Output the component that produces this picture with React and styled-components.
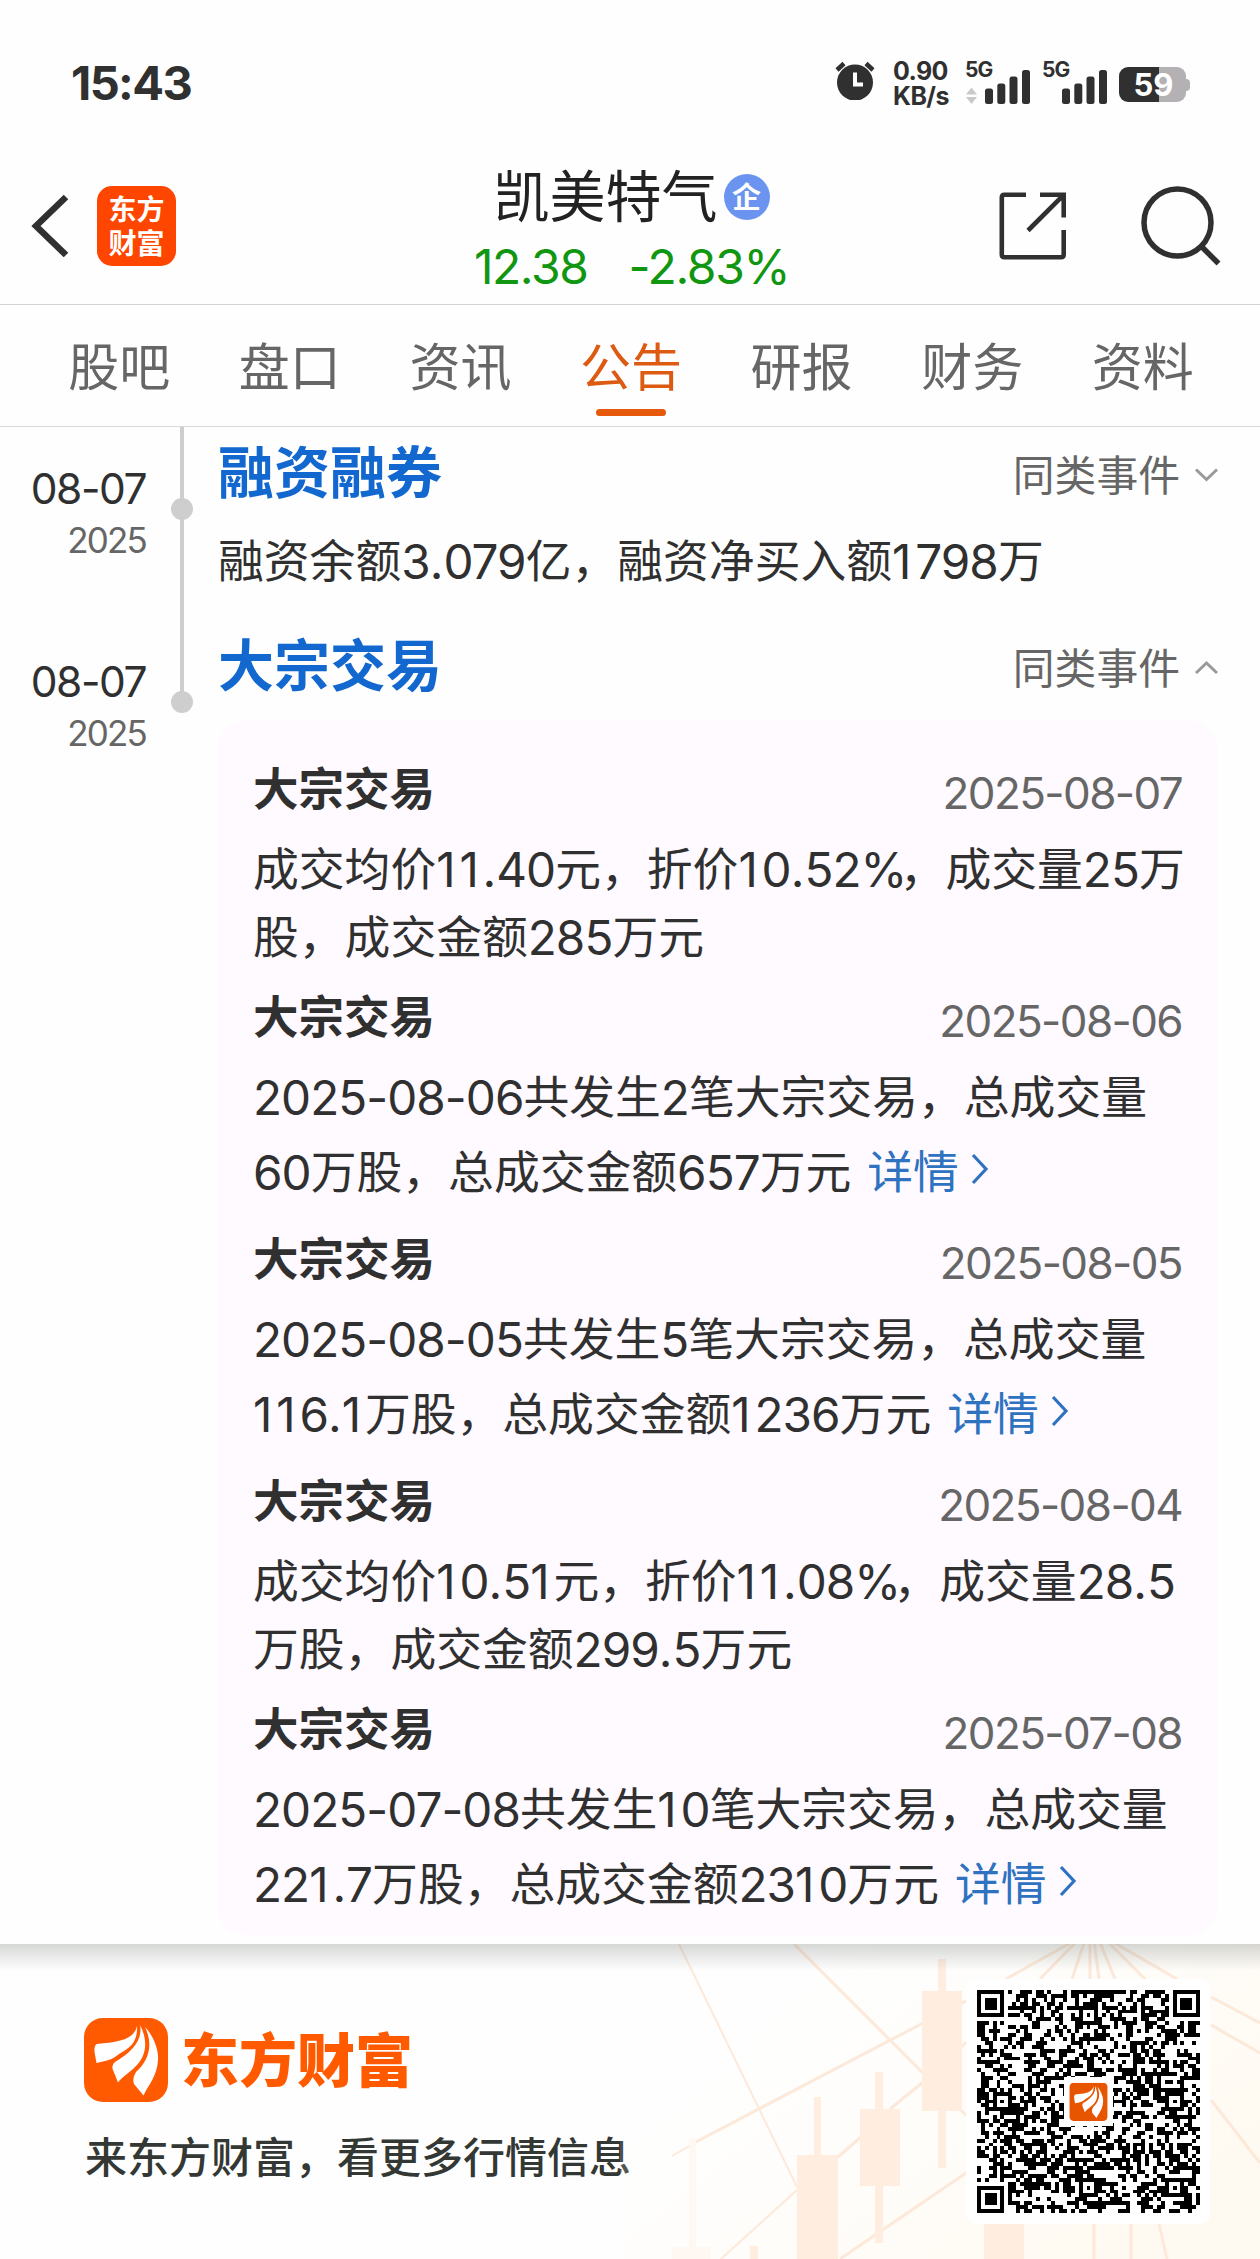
import React from "react";
import styled, { createGlobalStyle } from "styled-components";

const tabs = ["股吧", "盘口", "资讯", "公告", "研报", "财务", "资料"];

const trades = [
  {
    date: "2025-08-07",
    lines: ["成交均价11.40元，折价10.52%，成交量25万", "股，成交金额285万元"],
  },
  {
    date: "2025-08-06",
    lines: ["2025-08-06共发生2笔大宗交易，总成交量", "60万股，总成交金额657万元"],
    more: true,
  },
  {
    date: "2025-08-05",
    lines: [
      "2025-08-05共发生5笔大宗交易，总成交量",
      "116.1万股，总成交金额1236万元",
    ],
    more: true,
  },
  {
    date: "2025-08-04",
    lines: ["成交均价10.51元，折价11.08%，成交量28.5", "万股，成交金额299.5万元"],
  },
  {
    date: "2025-07-08",
    lines: [
      "2025-07-08共发生10笔大宗交易，总成交量",
      "221.7万股，总成交金额2310万元",
    ],
    more: true,
  },
];

const spacing = { 1: "0.08em", ".": "0", "%": "-0.16em" };

// digits are set a little larger than the Chinese text around them,
// "1", "." and "%" need their own tracking
const Mixed = ({ text }) =>
  text
    .split(/([0-9.%-]+)/)
    .filter(Boolean)
    .map((part, i) =>
      /[0-9]/.test(part) ? (
        <Num key={i}>
          {part
            .split(/([1.%])/)
            .filter(Boolean)
            .map((s, j) =>
              spacing[s] ? (
                <Tracked key={j} $space={spacing[s]}>
                  {s}
                </Tracked>
              ) : (
                s
              )
            )}
        </Num>
      ) : (
        part
      )
    );

const QR_SIZE = 57;

const ring = (x, y, cx, cy, r) => {
  const d = Math.max(Math.abs(x - cx), Math.abs(y - cy));
  if (d > r) return null;
  return r === 4 ? d === 3 || d < 2 : d !== 1;
};

const buildQr = () => {
  let seed = 20250807;
  let path = "";
  for (let y = 0; y < QR_SIZE; y++) {
    for (let x = 0; x < QR_SIZE; x++) {
      seed = (seed * 1103515245 + 12345) % 2147483648;
      let on = (seed >> 12) % 100 < 50;
      [[28, 6], [6, 28], [50, 28], [28, 50], [50, 50]].forEach(([cx, cy]) => {
        const v = ring(x, y, cx, cy, 2);
        if (v !== null) on = v;
      });
      [[3, 3], [53, 3], [3, 53]].forEach(([cx, cy]) => {
        const v = ring(x, y, cx, cy, 4);
        if (v !== null) on = v;
      });
      if (on) path += `M${x} ${y}h1v1h-1z`;
    }
  }
  return path;
};

const qrPath = buildQr();

const Feathers = () => (
  <g fill="#fff">
    <path d="M53 8C50 22 34 24 13 26Q10 27 10.5 34L12.5 45C22 43 28 42 35 36C46 30 54 24 53 8Z" />
    <path d="M56 7C59 22 48 34 31 44Q27 47 29 52L34 64.5C38 59 44 56 51 49C63 38 64 22 56 7Z" />
    <path d="M61 9C69 17 75 32 74 42C73 58 65 66 59.5 77.5L50 66Q48 60 52 54C64 43 70 28 61 9Z" />
  </g>
);

const Signal = ({ arrows }) => (
  <SignalBox>
    <SignalLabel>5G</SignalLabel>
    <svg width="66" height="36" viewBox="0 0 66 36">
      {arrows && (
        <path d="M1 26.500l5.500-7 5.500 7zM1 29l5.500 7 5.500-7z" fill="#c9c9c9" />
      )}
      <g fill="#303030">
        <rect x="20" y="20.500" width="8" height="15.500" rx="2.500" />
        <rect x="32.300" y="15.500" width="8" height="20.500" rx="2.500" />
        <rect x="44.500" y="8.500" width="8" height="27.500" rx="2.500" />
        <rect x="57" y="2" width="8" height="34" rx="2.500" />
      </g>
    </svg>
  </SignalBox>
);

const Arrow = ({ up }) => (
  <ArrowIcon width="24" height="16" viewBox="0 0 24 16">
    <path
      d={up ? "M2 13L12.500 3L23 13" : "M2 2.500L12.500 12.500L23 2.500"}
      fill="none"
      stroke="#999"
      strokeWidth="3"
    />
  </ArrowIcon>
);

const Event = ({ title, up, children }) => (
  <EventRow>
    <DateCol>
      <Day>08-07</Day>
      <Year>2025</Year>
    </DateCol>
    <Rail>
      <RailLine $short={up} />
      <Dot />
    </Rail>
    <EventBody>
      <EventHead>
        <EventTitle>{title}</EventTitle>
        <Similar>
          同类事件
          <Arrow up={up} />
        </Similar>
      </EventHead>
      {children}
    </EventBody>
  </EventRow>
);

const App = () => {
  return (
    <Page>
      <GlobalStyle />
      <StatusBar>
        <Clock>15:43</Clock>
        <StatusIcons>
          <svg width="40" height="40" viewBox="0 0 40 40">
            <circle cx="20" cy="22.500" r="18" fill="#303030" />
            <path
              d="M2 10L9 3.500M38 10L31 3.500"
              stroke="#303030"
              strokeWidth="4.500"
            />
            <path d="M20 12.500V24.500H28" fill="none" stroke="#fff" strokeWidth="4" />
          </svg>
          <Speed>
            <span>0.90</span>
            <span>KB/s</span>
          </Speed>
          <Signal arrows />
          <Signal />
          <Battery>
            <Level>59</Level>
            <Nub />
          </Battery>
        </StatusIcons>
      </StatusBar>

      <Header>
        <HeaderSide>
          <svg width="40" height="66" viewBox="0 0 40 66">
            <path
              d="M36 4L6 33L36 62"
              fill="none"
              stroke="#303030"
              strokeWidth="6.500"
            />
          </svg>
          <AppBadge>
            <span>东方</span>
            <span>财富</span>
          </AppBadge>
        </HeaderSide>
        <Stock>
          <StockName>
            凯美特气<Corp>企</Corp>
          </StockName>
          <Quote>
            <span>12.38</span>
            <span>-2.83%</span>
          </Quote>
        </Stock>
        <HeaderSide $end>
          <svg width="68" height="68" viewBox="0 0 68 68">
            <g fill="none" stroke="#303030" strokeWidth="4.600">
              <path d="M27 2.800H5.500Q2.800 2.800 2.800 5.500V62.500Q2.800 65.200 5.500 65.200H62Q64.700 65.200 64.700 62.500V38" />
              <path d="M41 2.800H64.700V25.500M64.700 2.800L29 38.500" />
            </g>
          </svg>
          <svg width="82" height="82" viewBox="0 0 82 82">
            <circle
              cx="37.500"
              cy="37.500"
              r="33.500"
              fill="none"
              stroke="#303030"
              strokeWidth="5.500"
            />
            <path d="M61.500 61.500L78.500 78.500" stroke="#303030" strokeWidth="5.500" />
          </svg>
        </HeaderSide>
      </Header>

      <Tabs>
        {tabs.map((tab) => (
          <Tab key={tab} $active={tab === "公告"}>
            {tab}
          </Tab>
        ))}
      </Tabs>

      <Timeline>
        <Event title="融资融券">
          <Summary>
            <Mixed text="融资余额3.079亿，融资净买入额1798万" />
          </Summary>
        </Event>
        <Event title="大宗交易" up>
          <TradeBox>
            {trades.map((trade) => (
              <Trade key={trade.date}>
                <TradeHead>
                  <TradeTitle>大宗交易</TradeTitle>
                  <TradeDate>{trade.date}</TradeDate>
                </TradeHead>
                <Line>
                  <span>
                    <Mixed text={trade.lines[0]} />
                  </span>
                </Line>
                <Line $tall={trade.more}>
                  <span>
                    <Mixed text={trade.lines[1]} />
                  </span>
                  {trade.more && (
                    <More>
                      详情
                      <svg width="20" height="32" viewBox="0 0 20 32">
                        <path
                          d="M3 2L16 16L3 30"
                          fill="none"
                          stroke="#2f72bf"
                          strokeWidth="3.200"
                        />
                      </svg>
                    </More>
                  )}
                </Line>
              </Trade>
            ))}
          </TradeBox>
        </Event>
      </Timeline>

      <Footer>
        <Chart width="640" height="315" viewBox="620 0 640 315">
          <defs>
            <linearGradient id="warm" x1="0" y1="0" x2="1" y2="0.600">
              <stop offset="0.200" stopColor="#fffdf9" stopOpacity="0" />
              <stop offset="1" stopColor="#fffaf1" />
            </linearGradient>
          </defs>
          <rect x="620" width="640" height="315" fill="url(#warm)" />
          <g stroke="#fde9d9" strokeWidth="3" fill="none">
            <path d="M794 0L923 129L975 180M690 201L923 79L970 55" />
            <path d="M838 213L861 193M890 165L923 138L970 95M840 315L966 229" />
            <path d="M679 0L797 243M797 246L721 315M672 212L700 196" strokeWidth="2" />
            <path d="M1072 -2L1006 35M1078 -4L1040 35M1085 -4L1072 35M1090 -4V35M1094 -4L1099 35M1099 -4L1115 35M1106 -4L1145 35M1113 -2L1177 35" />
            <path d="M1211 53L1260 79M1211 81L1260 109M1211 156L1260 219M1094 280V315M1131 280V315M1159 280L1167 315" />
          </g>
          <g fill="#ffeddf">
            <path d="M938 15h8v209h-8zM922 47h40v120h-40z" />
            <path d="M875 128h8v171h-8zM860 165h40v77h-40z" />
            <path d="M814 153h7v60h-7zM797 211h41v104h-41z" />
            <path d="M984 280h40v35h-40zM750 302h8v13h-8z" />
          </g>
          <path d="M689 194h7v109h-7zM672 303h39v12h-39z" fill="#fff7f1" />
        </Chart>
        <Shade />
        <Brand>
          <BrandRow>
            <svg width="84" height="84" viewBox="0 0 84 84">
              <rect width="84" height="84" rx="19" fill="#ff5a00" />
              <Feathers />
            </svg>
            <BrandName>东方财富</BrandName>
          </BrandRow>
          <Slogan>来东方财富，看更多行情信息</Slogan>
        </Brand>
        <QrCard>
          <svg
            width="223"
            height="223"
            viewBox="0 0 57 57"
            shapeRendering="crispEdges"
          >
            <path d={qrPath} fill="#000" />
            <rect x="22.300" y="22.300" width="12.400" height="12.400" fill="#fff" />
            <svg
              x="23.600"
              y="23.700"
              width="9.800"
              height="9.800"
              viewBox="0 0 84 84"
              shapeRendering="auto"
            >
              <rect width="84" height="84" rx="10" fill="#e85500" />
              <Feathers />
            </svg>
          </svg>
        </QrCard>
      </Footer>
    </Page>
  );
};

const GlobalStyle = createGlobalStyle`
  * {
    box-sizing: border-box;
  }
  body {
    margin: 0;
    background: #fefefe;
  }
  svg {
    display: block;
    flex: none;
  }
`;

const Page = styled.div`
  width: 1260px;
  height: 2259px;
  display: flex;
  flex-direction: column;
  overflow: hidden;
  background: #fefefe;
  color: #303030;
  font-family: "Noto Sans CJK SC", sans-serif;
  white-space: nowrap;
`;

const Num = styled.span`
  font-family: Inter, sans-serif;
  font-size: 1.04em;
  letter-spacing: -0.02em;
  line-height: 1;
  vertical-align: -1px;
`;

const Tracked = styled.span`
  letter-spacing: ${({ $space }) => $space};
`;

const StatusBar = styled.div`
  height: 147px;
  padding: 60px 70px 0 71px;
  display: flex;
  justify-content: space-between;
  align-items: flex-start;
  font-family: Inter, sans-serif;
`;

const Clock = styled.div`
  font-size: 47px;
  line-height: 46px;
  font-weight: 700;
  letter-spacing: -1.6px;
`;

const StatusIcons = styled.div`
  display: flex;
  align-items: flex-start;
`;

const Speed = styled.div`
  width: 58px;
  margin: -1px 14px 0 18px;
  display: flex;
  flex-direction: column;
  font-size: 25px;
  line-height: 25px;
  font-weight: 700;
  letter-spacing: -0.6px;
`;

const SignalBox = styled.div`
  width: 66px;
  height: 44px;
  margin-right: 11px;
  padding-top: 1px;
  display: flex;
  flex-direction: column;
`;

const SignalLabel = styled.span`
  height: 7px;
  font-size: 21px;
  line-height: 17px;
  font-weight: 700;
  letter-spacing: -1px;
`;

const Battery = styled.div`
  margin-top: 7px;
  display: flex;
  align-items: center;
`;

const Level = styled.div`
  width: 67px;
  height: 35px;
  border-radius: 9px;
  background: linear-gradient(to right, #303030 60%, #b4b1b4 60%);
  color: #fff;
  font-size: 31px;
  line-height: 36px;
  font-weight: 700;
  text-align: center;
  padding-left: 2px;
`;

const Nub = styled.div`
  width: 4px;
  height: 12px;
  border-radius: 0 4px 4px 0;
  background: #b4b1b4;
`;

const Header = styled.header`
  height: 158px;
  padding: 0 38px 0 30px;
  display: flex;
  justify-content: space-between;
  border-bottom: 1px solid #d4d4d4;
`;

const HeaderSide = styled.div`
  width: 280px;
  height: 158px;
  display: flex;
  align-items: center;
  gap: ${({ $end }) => ($end ? "73px" : "27px")};
  justify-content: ${({ $end }) => ($end ? "flex-end" : "flex-start")};
`;

const AppBadge = styled.div`
  width: 79px;
  height: 80px;
  padding-bottom: 3px;
  border-radius: 15px;
  background: #ff4600;
  color: #fff;
  display: flex;
  flex-direction: column;
  align-items: center;
  justify-content: center;
  font-size: 28px;
  line-height: 34px;
  font-weight: 700;
`;

const Stock = styled.div`
  padding-left: 11px;
  display: flex;
  flex-direction: column;
  align-items: center;
`;

const StockName = styled.div`
  height: 92px;
  padding-top: 0;
  display: flex;
  align-items: center;
  font-size: 56px;
  line-height: 84px;
  color: #222;
`;

const Corp = styled.span`
  width: 46px;
  height: 46px;
  margin: 8px 0 0 6px;
  border-radius: 50%;
  background: #6b94f0;
  color: #fff;
  font-size: 29px;
  line-height: 43px;
  font-weight: 700;
  text-align: center;
`;

const Quote = styled.div`
  display: flex;
  gap: 41px;
  font-family: Inter, sans-serif;
  font-size: 48px;
  line-height: 56px;
  letter-spacing: -1.4px;
  color: #119611;
`;

const Tabs = styled.nav`
  height: 122px;
  padding: 0 32px 0 34px;
  display: flex;
  border-bottom: 1px solid #d9d9d9;
`;

const Tab = styled.div`
  flex: 1;
  display: flex;
  flex-direction: column;
  align-items: center;
  font-size: 51px;
  line-height: 76px;
  padding-top: 21px;
  color: ${({ $active }) => ($active ? "#dd5a12" : "#666")};

  &::after {
    content: "";
    width: 70px;
    height: 7px;
    margin-top: 7px;
    border-radius: 4px;
    background: ${({ $active }) => ($active ? "#e6590b" : "transparent")};
  }
`;

const Timeline = styled.main`
  height: 1517px;
  padding-right: 42px;
  display: flex;
  flex-direction: column;
`;

const EventRow = styled.section`
  display: flex;
`;

const DateCol = styled.div`
  flex: none;
  width: 146px;
  padding-top: 37px;
  display: flex;
  flex-direction: column;
  align-items: flex-end;
  font-family: Inter, sans-serif;
`;

const Day = styled.div`
  font-size: 42.5px;
  line-height: 50px;
  letter-spacing: -1.5px;
`;

const Year = styled.div`
  font-size: 35px;
  line-height: 52px;
  letter-spacing: -1.8px;
  color: #666;
`;

const Rail = styled.div`
  flex: none;
  width: 71px;
  display: flex;
  justify-content: center;
  position: relative;
`;

const RailLine = styled.div`
  width: 4px;
  height: ${({ $short }) => ($short ? "82px" : "100%")};
  background: #cecece;
`;

const Dot = styled.div`
  position: absolute;
  top: 71px;
  left: 24.5px;
  width: 22px;
  height: 22px;
  border-radius: 50%;
  background: #cecece;
`;

const EventBody = styled.div`
  flex: 1;
  min-width: 0;
`;

const EventHead = styled.div`
  height: 97px;
  padding: 0 0 0 1px;
  display: flex;
  justify-content: space-between;
`;

const EventTitle = styled.h2`
  margin: 0;
  font-size: 56px;
  line-height: 83px;
  font-weight: 700;
  color: #1268cf;
`;

const Similar = styled.div`
  height: 92px;
  display: flex;
  align-items: center;
  gap: 14px;
  font-size: 41.8px;
  color: #666;
`;

const ArrowIcon = styled.svg`
  margin-top: 4px;
`;

const Summary = styled.p`
  height: 96px;
  margin: 0;
  padding-left: 1px;
  font-size: 45.8px;
  line-height: 68px;
`;

const TradeBox = styled.div`
  margin-top: 4px;
  padding: 19px 36px 13px;
  border-radius: 28px;
  background: #fefaff;
`;

const Trade = styled.article`
  display: flex;
  flex-direction: column;
`;

const TradeHead = styled.div`
  height: 92px;
  display: flex;
  align-items: center;
  justify-content: space-between;
`;

const TradeTitle = styled.h3`
  margin: 0;
  font-size: 45.5px;
  line-height: 66px;
  font-weight: 700;
`;

const TradeDate = styled.div`
  padding-top: 13px;
  font-family: Inter, sans-serif;
  font-size: 44px;
  letter-spacing: -1.6px;
  color: #666;
`;

const Line = styled.div`
  height: ${({ $tall }) => ($tall ? "82px" : "68px")};
  display: flex;
  align-items: center;
  font-size: 45.8px;
  line-height: 66px;
`;

const More = styled.span`
  margin-left: 16px;
  display: flex;
  align-items: center;
  gap: 11px;
  color: #2f72bf;
`;

const Footer = styled.footer`
  height: 315px;
  padding: 35px 50px 0 84px;
  display: flex;
  justify-content: space-between;
  align-items: flex-start;
  position: relative;
`;

const Chart = styled.svg`
  position: absolute;
  top: 0;
  right: 0;
`;

const Shade = styled.div`
  position: absolute;
  top: 0;
  left: 0;
  width: 100%;
  height: 27px;
  background: linear-gradient(rgba(70, 80, 72, 0.22), rgba(90, 90, 90, 0));
`;

const Brand = styled.div`
  padding-top: 39px;
`;

const BrandRow = styled.div`
  display: flex;
  align-items: center;
  gap: 13px;
`;

const BrandName = styled.div`
  padding-bottom: 5px;
  font-size: 58px;
  line-height: 79px;
  font-weight: 900;
  color: #ff5a00;
`;

const Slogan = styled.div`
  margin: 22px 0 0 1px;
  font-size: 42px;
  line-height: 62px;
  font-weight: 500;
  color: #343834;
`;

const QrCard = styled.div`
  width: 244px;
  height: 245px;
  padding: 11px;
  border-radius: 10px;
  background: #fff;
  position: relative;
`;

export default App;
